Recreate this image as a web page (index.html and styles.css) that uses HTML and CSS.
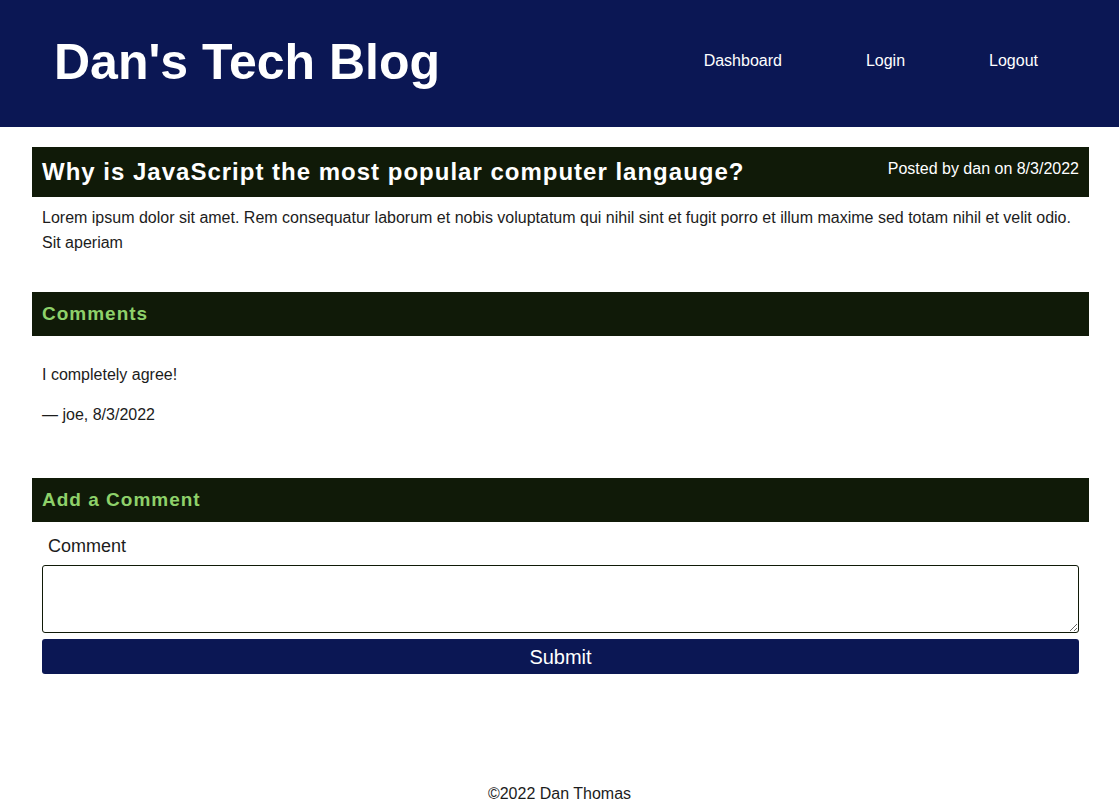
FILE: index.html
```html
<!DOCTYPE html>
<html lang="en">
<head>
<meta charset="UTF-8">
<title>Dan's Tech Blog</title>
<link rel="stylesheet" href="styles.css">
</head>
<body>
<header class="site-header">
  <h1 class="site-title">Dan's Tech Blog</h1>
  <nav class="site-nav">
    <a href="#">Dashboard</a>
    <a href="#">Login</a>
    <a href="#">Logout</a>
  </nav>
</header>
<main class="main">
  <article class="post">
    <div class="post-head">
      <h2 class="post-title">Why is JavaScript the most popular computer langauge?</h2>
      <span class="post-meta">Posted by dan on 8/3/2022</span>
    </div>
    <p class="post-body">Lorem ipsum dolor sit amet. Rem consequatur laborum et nobis voluptatum qui nihil sint et fugit porro et illum maxime sed totam nihil et velit odio. Sit aperiam</p>
  </article>
  <section class="comments">
    <h3 class="bar-title">Comments</h3>
    <div class="comment">
      <p class="comment-text">I completely agree!</p>
      <p class="comment-by">— joe, 8/3/2022</p>
    </div>
  </section>
  <section class="add-comment">
    <h3 class="bar-title">Add a Comment</h3>
    <form class="comment-form">
      <label class="comment-label" for="comment">Comment</label>
      <textarea id="comment" class="comment-input"></textarea>
      <button type="button" class="submit-btn">Submit</button>
    </form>
  </section>
</main>
<footer class="site-footer">©2022 Dan Thomas</footer>
</body>
</html>
```
FILE: styles.css
```css
* { box-sizing: border-box; }
html, body { margin: 0; padding: 0; }
body {
  font-family: "Liberation Sans", Arial, sans-serif;
  color: #1c1c1c;
  min-height: 100vh;
  display: flex;
  flex-direction: column;
}
.site-header {
  background: #0b1754;
  height: 127px;
  display: flex;
  align-items: center;
  justify-content: space-between;
  padding: 0 0 0 54px;
}
.site-title {
  margin: 0;
  color: #fff;
  font-size: 50px;
  font-weight: bold;
  letter-spacing: 0;
  padding-bottom: 4px;
}
.site-nav {
  display: flex;
  align-items: center;
  padding-right: 81px;
  padding-bottom: 5px;
}
.site-nav a {
  color: #fff;
  text-decoration: none;
  font-size: 16px;
  margin-left: 84px;
}
.main {
  padding: 20px 30px 0 32px;
}
.post-head {
  background: #101a08;
  color: #fff;
  display: flex;
  justify-content: space-between;
  align-items: flex-start;
  height: 50px;
  padding: 0 10px;
}
.post-title {
  margin: 11px 0 0;
  font-size: 24px;
  letter-spacing: 1px;
  font-weight: bold;
}
.post-meta {
  font-size: 16px;
  margin-top: 13px;
}
.post-body {
  margin: 0;
  padding: 8px 10px 0;
  font-size: 16px;
  line-height: 25px;
}
.comments { margin-top: 37px; }
.bar-title {
  margin: 0;
  background: #101a08;
  color: #8ed16a;
  font-size: 19px;
  letter-spacing: 1px;
  font-weight: bold;
  height: 44px;
  line-height: 44px;
  padding: 0 10px;
}
.comment {
  padding: 29px 10px 0;
}
.comment-text, .comment-by {
  margin: 0;
  font-size: 16px;
  line-height: 20px;
}
.comment-by { margin-top: 20px; }
.add-comment { margin-top: 53px; }
.comment-form {
  display: flex;
  flex-direction: column;
  padding: 0 10px;
}
.comment-label {
  font-size: 18px;
  margin: 14px 0 0 6px;
  line-height: 20px;
}
.comment-input {
  margin-top: 9px;
  height: 68px;
  border: 1px solid #101a08;
  border-radius: 3px;
  resize: vertical;
  font-family: inherit;
}
.submit-btn {
  margin-top: 6px;
  height: 35px;
  padding-top: 2px;
  background: #0b1754;
  color: #fff;
  border: none;
  border-radius: 3px;
  font-family: inherit;
  font-size: 20px;
}
.site-footer {
  margin-top: auto;
  text-align: center;
  font-size: 16px;
  padding-bottom: 0;
  line-height: 20px;
}
```
